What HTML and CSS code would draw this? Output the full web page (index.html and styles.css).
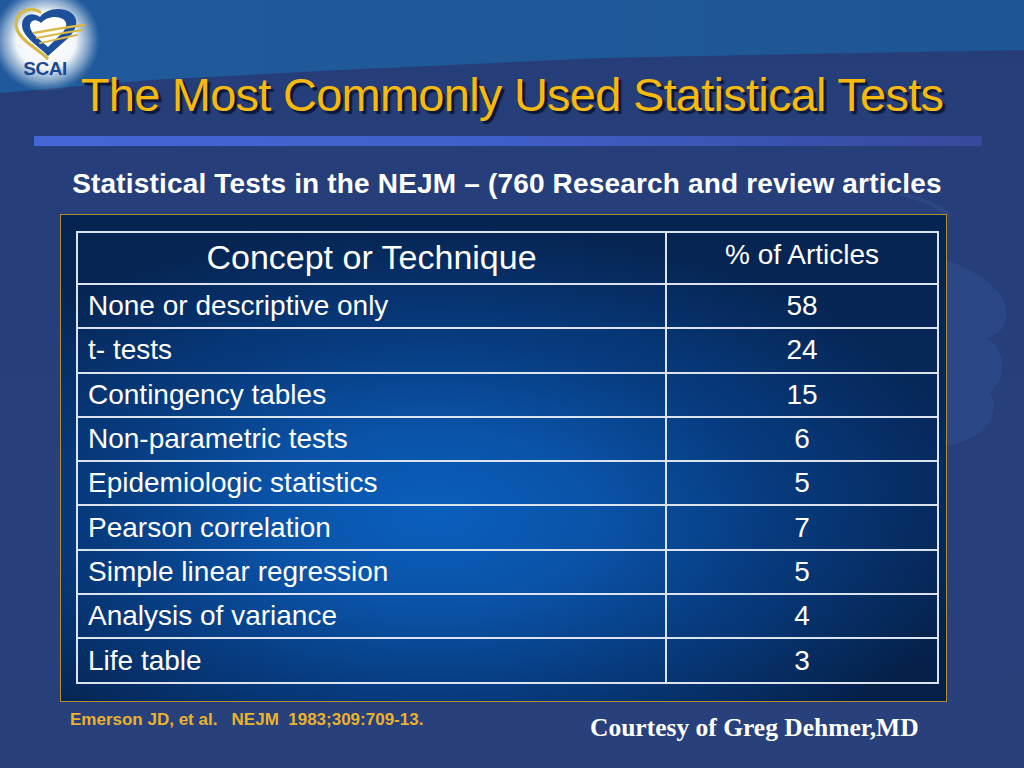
FILE: index.html
```html
<!DOCTYPE html>
<html>
<head>
<meta charset="utf-8">
<link rel="stylesheet" href="styles.css">
</head>
<body>
<div class="slide">
  <div class="band"></div>
  <svg class="watermark" width="124" height="280" viewBox="0 0 124 280">
    <path d="M0,14 C22,18 38,26 50,36" fill="none" stroke="#3a5694" stroke-width="4" opacity="0.35"/>
    <path d="M40,78 C78,90 110,112 106,138 C104,150 96,156 86,158 C106,168 108,196 90,213 C100,230 92,256 48,266 L40,266 Z" fill="#2e4886" opacity="0.9"/>
  </svg>
  <svg class="logo" width="110" height="100" viewBox="0 0 110 100">
    <defs>
      <radialGradient id="glow" cx="0.5" cy="0.5" r="0.5">
        <stop offset="0" stop-color="#ffffff" stop-opacity="1"/>
        <stop offset="0.55" stop-color="#ffffff" stop-opacity="0.95"/>
        <stop offset="0.8" stop-color="#d6e4f2" stop-opacity="0.5"/>
        <stop offset="1" stop-color="#9dbbdc" stop-opacity="0"/>
      </radialGradient>
    </defs>
    <ellipse cx="46" cy="40" rx="54" ry="52" fill="url(#glow)"/>
    <path d="M47,58 C37,48 15,38 16,23 C17,11 30,6 40,12" fill="none" stroke="#d6b947" stroke-width="3.2" stroke-linecap="round"/>
    <path d="M48,56 C40,47 22,37 22,25 C22,15 32,11 40,17 C45,10 59,6 70,12 C81,19 76,32 66,40 Z" fill="#1d4f9a"/>
    <path d="M48,47 C42,41 30,34 30,26 C30,20 36,18 41,23 C46,17 56,15 63,19 C69,23 66,30 60,35 Z" fill="#ffffff"/>
    <path d="M34,33 C50,30 68,27 84,25" fill="none" stroke="#d9b948" stroke-width="2.6" stroke-linecap="round"/>
    <path d="M37,38 C52,35 68,32 82,30" fill="none" stroke="#d9b948" stroke-width="2.2" stroke-linecap="round"/>
    <path d="M40,43 C54,40 67,37 77,35" fill="none" stroke="#d9b948" stroke-width="1.8" stroke-linecap="round"/>
    <text x="45" y="75" text-anchor="middle" class="logo-text">SCAI</text>
  </svg>

  <h1 class="title">The Most Commonly Used Statistical Tests</h1>
  <div class="rule"></div>
  <h2 class="subtitle">Statistical Tests in the NEJM – (760 Research and review articles</h2>

  <div class="panel">
    <table class="stats">
      <thead>
        <tr>
          <th class="concept">Concept or Technique</th>
          <th class="pct">% of Articles</th>
        </tr>
      </thead>
      <tbody>
        <tr><td>None or descriptive only</td><td class="num">58</td></tr>
        <tr><td>t- tests</td><td class="num">24</td></tr>
        <tr><td>Contingency tables</td><td class="num">15</td></tr>
        <tr><td>Non-parametric tests</td><td class="num">6</td></tr>
        <tr><td>Epidemiologic statistics</td><td class="num">5</td></tr>
        <tr><td>Pearson correlation</td><td class="num">7</td></tr>
        <tr><td>Simple linear regression</td><td class="num">5</td></tr>
        <tr><td>Analysis of variance</td><td class="num">4</td></tr>
        <tr><td>Life table</td><td class="num">3</td></tr>
      </tbody>
    </table>
  </div>

  <div class="footer">
    <div class="ref">Emerson JD, et al.&nbsp;&nbsp; NEJM&nbsp; 1983;309:709-13.</div>
    <div class="courtesy">Courtesy of Greg Dehmer,MD</div>
  </div>
</div>
</body>
</html>
```

FILE: styles.css
```css
* { box-sizing: border-box; }
html, body {
  margin: 0;
  padding: 0;
}
body {
  width: 1024px;
  height: 768px;
  overflow: hidden;
  background: #263f7b;
  font-family: "Liberation Sans", Arial, sans-serif;
}
.slide {
  position: relative;
  width: 1024px;
  height: 768px;
  overflow: hidden;
  padding-top: 67px;
  background: linear-gradient(180deg, #253e7a 0%, #273f7b 60%, #28417b 100%);
}
.band {
  position: absolute;
  left: 0;
  top: 0;
  width: 1024px;
  height: 100px;
  background: linear-gradient(90deg, #1f5a9c 0%, #1f5898 60%, #1e5594 100%);
  clip-path: polygon(0 0, 1024px 0, 1024px 50px, 800px 54px, 600px 58px, 340px 70px, 150px 80px, 0 93px);
}
.watermark {
  position: absolute;
  left: 900px;
  top: 180px;
}
.logo {
  position: absolute;
  left: 0;
  top: 0;
}
.logo-text {
  font-family: "Liberation Sans", Arial, sans-serif;
  font-weight: bold;
  font-size: 19px;
  letter-spacing: -0.5px;
  fill: #1b4a92;
}
.title {
  position: relative;
  margin: 0;
  text-align: center;
  font-weight: normal;
  font-size: 47px;
  line-height: 56px;
  letter-spacing: -0.75px;
  color: #f7b90c;
  text-shadow: 3px 3px 1px #0b1838;
}
.rule {
  position: relative;
  margin: 13px 0 0 34px;
  width: 948px;
  height: 10px;
  background: linear-gradient(90deg, #4566d6 0%, #3f5fc8 50%, #36499c 100%);
}
.subtitle {
  position: relative;
  margin: 21px 0 0 0;
  text-align: center;
  font-weight: bold;
  font-size: 28px;
  line-height: 34px;
  letter-spacing: 0.17px;
  color: #ffffff;
  padding-right: 10px;
}
.panel {
  position: relative;
  margin: 13px 0 0 60px;
  width: 887px;
  height: 488px;
  padding: 16px 7px 0 15px;
  border: 1px solid #b38c32;
  background:
    radial-gradient(ellipse 62% 60% at 42% 62%, #0a5fbc 0%, #0a53a8 30%, #073c80 60%, rgba(5,40,90,0) 100%),
    linear-gradient(180deg, #062451 0%, #06285a 50%, #052048 100%);
}
.stats {
  width: 863px;
  border-collapse: collapse;
  color: #ffffff;
  font-size: 28px;
}
.stats th, .stats td {
  border: 2px solid #dbe3ef;
  padding: 0 0 0 10px;
  vertical-align: middle;
  font-weight: normal;
}
.stats thead tr { height: 52px; }
.stats tbody tr { height: 44.3px; }
.stats th.concept {
  width: 589px;
  text-align: center;
  font-size: 34px;
  padding: 0 0 2px 0;
}
.stats th.pct {
  text-align: center;
  font-size: 28px;
  padding: 0 0 6px 0;
}
.stats td.num {
  text-align: center;
  padding: 0;
}
.footer {
  position: relative;
  display: flex;
  align-items: flex-start;
  margin-top: 8px;
  padding-left: 70px;
}
.ref {
  width: 520px;
  padding-top: 0;
  font-weight: bold;
  font-size: 17px;
  line-height: 20px;
  color: #e9b22e;
}
.courtesy {
  padding-top: 3px;
  font-family: "Liberation Serif", "Times New Roman", serif;
  font-weight: bold;
  font-size: 25.5px;
  line-height: 30px;
  color: #ffffff;
}
```
